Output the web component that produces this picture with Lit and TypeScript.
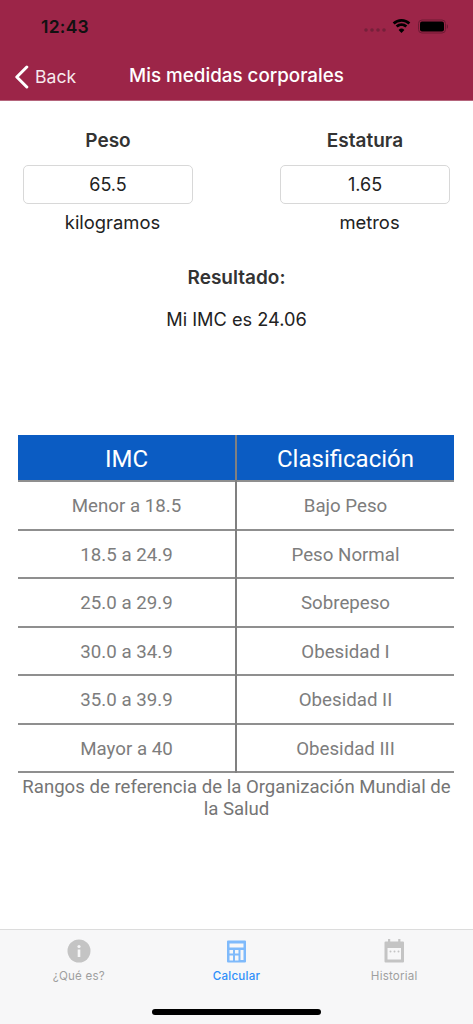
import { LitElement, html, css } from "lit";
import { customElement } from "lit/decorators.js";

const rows = [
  ["Menor a 18.5", "Bajo Peso"],
  ["18.5 a 24.9", "Peso Normal"],
  ["25.0 a 29.9", "Sobrepeso"],
  ["30.0 a 34.9", "Obesidad I"],
  ["35.0 a 39.9", "Obesidad II"],
  ["Mayor a 40", "Obesidad III"],
];

@customElement("app-root")
export class AppRoot extends LitElement {
  static styles = css`
    :host { display: flex; flex-direction: column; width: 473px; height: 1024px; background: #fff; font-family: Inter, "Liberation Sans", sans-serif; overflow: hidden; position: relative; }
    .head { height: 101px; background: #9c2548; border-bottom: 1px solid #b5657c; box-sizing: border-box; display: flex; flex-direction: column; flex: none; }
    .status { height: 52px; display: flex; align-items: center; padding: 0 25px 0 41px; justify-content: space-between; box-sizing: border-box; }
    .time { font-size: 17.5px; font-weight: 600; color: #111; letter-spacing: 0.25px; }
    .sicons { display: flex; align-items: center; gap: 7px; }
    .nav { height: 48px; position: relative; display: flex; align-items: center; justify-content: center; color: #fff; padding-bottom: 2px; box-sizing: border-box; }
    .back { position: absolute; left: 14px; top: 0; bottom: 0; display: flex; align-items: center; gap: 6px; font-size: 17.6px; color: #f6e9ed; }
    .back svg { margin-top: 1px; }
    .title { font-size: 18.8px; font-weight: 550; }
    .form { display: grid; grid-template-columns: 170px 170px; justify-content: space-between; padding: 28px 23px 0; }
    .field { display: flex; flex-direction: column; align-items: center; color: #222; }
    .lab { font-size: 19px; font-weight: 600; color: #333; line-height: 24px; }
    .inp { width: 100%; height: 39px; box-sizing: border-box; margin-top: 12px; border: 1px solid #d8d8d8; border-radius: 5px; display: flex; align-items: center; justify-content: center; font-size: 18px; color: #222; }
    .unit { font-size: 18.4px; line-height: 24px; margin-top: 6px; padding-left: 9px; }
    .res { text-align: center; margin-top: 32px; color: #222; }
    .res .t { font-size: 19px; font-weight: 600; line-height: 24px; color: #333; }
    .res .v { font-size: 18.2px; line-height: 24px; margin-top: 17px; }
    .table { margin: 104px 19px 0 18px; font-family: Roboto, sans-serif; }
    .tr { display: grid; grid-template-columns: 217px 2px 1fr; height: 48.500px; border-bottom: 2px solid #8f8f8f; box-sizing: border-box; }
    .tr.h { height: 47px; background: #0b5cc3; border-bottom: 2px solid #8f8f8f; }
    .c { display: flex; align-items: center; justify-content: center; font-size: 18.700px; color: #7d7d7d; padding-top: 2px; }
    .h .c { font-size: 24px; color: #fff; }
    .sep { background: #808080; margin-bottom: -2px; }
    .note { font-family: Roboto, sans-serif; font-size: 18.600px; line-height: 22px; color: #757575; text-align: center; padding: 3px 18px 0; }
    .spacer { flex: 1; }
    .tabs { height: 95px; flex: none; background: #f7f7f8; border-top: 1px solid #dcdcdc; box-sizing: border-box; display: grid; grid-template-columns: repeat(3, 1fr); padding-top: 9px; position: relative; }
    .tab { display: flex; flex-direction: column; align-items: center; font-size: 11.600px; color: #9f9f9f; gap: 6px; letter-spacing: .2px; }
    .tab svg { display: block; }
    .tab.on { color: #2f8ffa; font-weight: 500; }
    .bar { position: absolute; left: 152px; bottom: 9px; width: 169px; height: 6px; border-radius: 3px; background: #000; }
  `;

  render() {
    return html`
      <div class="head">
        <div class="status">
          <span class="time">12:43</span>
          <div class="sicons">
            <svg width="22" height="14" viewBox="0 0 22 14"><g fill="#76203a"><circle cx="2" cy="11" r="1.800"/><circle cx="8" cy="11" r="1.800"/><circle cx="14" cy="11" r="1.800"/><circle cx="20" cy="11" r="1.800"/></g></svg>
            <svg style="margin-left:-1px" width="19" height="14" viewBox="0 0 19 14"><path d="M9.500 2.800c2.700 0 5.100 1.100 6.900 2.800l1.900-2A12.500 12.500 0 0 0 9.500 0 12.500 12.500 0 0 0 .7 3.600l1.900 2a9.900 9.900 0 0 1 6.900-2.800zM9.500 7.100c1.500 0 2.900.6 3.900 1.500l1.900-2a8.400 8.400 0 0 0-11.600 0l1.900 2c1-.9 2.400-1.500 3.900-1.500zM9.500 14l2.900-3.100a4.200 4.200 0 0 0-5.800 0z" fill="#000"/></svg>
            <svg width="30" height="15" viewBox="0 0 30 15"><rect x=".5" y="1" width="27" height="13" rx="3.500" fill="none" stroke="#6e1a33"/><rect x="2" y="2.500" width="24" height="10" rx="2" fill="#000"/><path d="M28.800 5.200v4.600c.7-.3 1.200-1.200 1.200-2.300s-.5-2-1.200-2.300z" fill="#6e1a33"/></svg>
          </div>
        </div>
        <div class="nav">
          <div class="back">
            <svg width="15" height="24" viewBox="0 0 15 24"><path d="M12.800 2 2.800 12l10 10" fill="none" stroke="#fff" stroke-width="3" stroke-linecap="round" stroke-linejoin="round"/></svg>
            <span>Back</span>
          </div>
          <span class="title">Mis medidas corporales</span>
        </div>
      </div>
      <div class="form">
        <div class="field"><span class="lab">Peso</span><div class="inp">65.5</div><span class="unit">kilogramos</span></div>
        <div class="field"><span class="lab">Estatura</span><div class="inp">1.65</div><span class="unit">metros</span></div>
      </div>
      <div class="res"><div class="t">Resultado:</div><div class="v">Mi IMC es 24.06</div></div>
      <div class="table">
        <div class="tr h"><div class="c">IMC</div><div class="sep"></div><div class="c">Clasificación</div></div>
        ${rows.map(r => html`<div class="tr"><div class="c">${r[0]}</div><div class="sep"></div><div class="c">${r[1]}</div></div>`)}
      </div>
      <div class="note">Rangos de referencia de la Organización Mundial de la Salud</div>
      <div class="spacer"></div>
      <div class="tabs">
        <div class="tab">
          <svg width="24" height="24" viewBox="0 0 24 24"><circle cx="12" cy="12" r="11.500" fill="#c4c4c4"/><circle cx="12" cy="7.500" r="1.600" fill="#f7f7f8"/><rect x="10.700" y="10.500" width="2.600" height="7.500" fill="#f7f7f8"/></svg>
          <span>¿Qué es?</span>
        </div>
        <div class="tab on">
          <svg width="24" height="24" viewBox="0 0 24 24"><path fill-rule="evenodd" fill="#7fbafb" d="M4 1.500h17a1 1 0 0 1 1 1v20a1 1 0 0 1-1 1H4a1 1 0 0 1-1-1v-20a1 1 0 0 1 1-1zM5.500 4.500v4h14v-4zM5.500 11v3.500h3.500V11zm5.500 0v3.500h3.500V11zm5.500 0v10h3V11zM5.500 16.500v5h3.500v-5zm5.500 0v5h3.500v-5z"/></svg>
          <span>Calcular</span>
        </div>
        <div class="tab">
          <svg width="24" height="24" viewBox="0 0 24 24"><path fill-rule="evenodd" fill="#c4c4c4" d="M6 0h2.200v2.500h8V0h2.200v2.500h2.600a1 1 0 0 1 1 1v19a1 1 0 0 1-1 1H3.500a1 1 0 0 1-1-1v-19a1 1 0 0 1 1-1H6zM5.500 9v11.500h13.500V9z"/><g fill="#c4c4c4"><circle cx="8.500" cy="12.500" r="1"/><circle cx="12.500" cy="12.500" r="1"/><circle cx="16.500" cy="12.500" r="1"/></g></svg>
          <span>Historial</span>
        </div>
        <div class="bar"></div>
      </div>
    `;
  }
}
